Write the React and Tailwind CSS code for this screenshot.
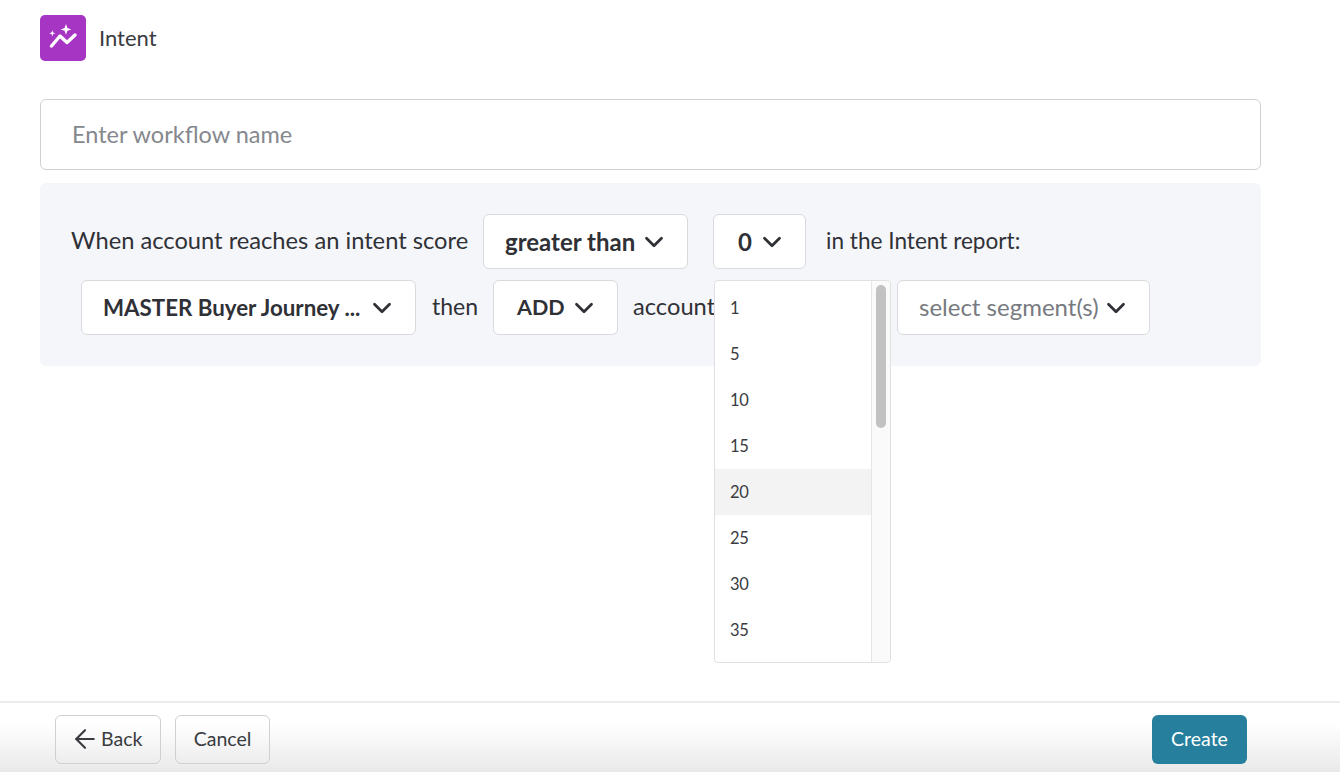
import React from 'react';
import { ArrowLeft, ChevronDown } from 'lucide-react';

const OPTIONS = ['1', '5', '10', '15', '20', '25', '30', '35'];

function Select({ label, className, muted = false }) {
  return (
    <button className={`${className} h-[55px] shrink-0 flex items-center justify-between pr-[18px] bg-white border border-[#d9dadd] rounded-[6px] ${muted ? 'font-normal text-[#777a80]' : 'font-bold text-[#2f3136]'}`}>
      <span className={muted ? 'pb-[2px]' : ''}>{label}</span>
      <ChevronDown size={30} strokeWidth={2.2} className="text-[#2f3136]" />
    </button>
  );
}

function IntentIcon() {
  return (
    <div className="w-[46px] h-[46px] rounded-[5px] bg-[#a535c2] flex items-center justify-center">
      <svg width="46" height="46" viewBox="0 0 46 46" fill="none">
        <path d="M11.5 31 L20 21 L27 27.5 L35 20" stroke="#fff" strokeWidth="3.4" strokeLinecap="round" strokeLinejoin="round" />
        <path d="M26 9 L27.4 13 L31.4 14.4 L27.4 15.8 L26 19.8 L24.6 15.8 L20.6 14.4 L24.6 13 Z" fill="#fff" />
        <path d="M12.3 15.2 L13.1 17.5 L15.4 18.3 L13.1 19.1 L12.3 21.4 L11.5 19.1 L9.2 18.3 L11.5 17.5 Z" fill="#fff" />
      </svg>
    </div>
  );
}

export default function App() {
  return (
    <div className="w-[1340px] h-[772px] overflow-hidden flex flex-col bg-white text-[#2f3136] font-['Lato',sans-serif]">
      <div className="flex-1 pl-[40px] pr-[79px] pt-[15px]">
        {/* Header */}
        <div className="flex items-center gap-[13px]">
          <IntentIcon />
          <span className="text-[22px] pb-[2px] text-[#3a3c41]">Intent</span>
        </div>

        <input
          className="mt-[38px] w-full h-[71px] pl-[31px] pb-[2px] border border-[#cfd1d4] rounded-[6px] text-[23.5px] placeholder:text-[#85888d] outline-none"
          placeholder="Enter workflow name"
        />

        {/* Condition panel */}
        <div className="mt-[13px] h-[183px] bg-[#f5f6fa] rounded-[6px] pt-[31px] pl-[31px]">
          <div className="flex items-center">
            <span className="w-[397px] pb-[1px] text-[23.7px] whitespace-nowrap">When account reaches an intent score</span>
            <Select label="greater than" className="ml-[15px] w-[205px] pl-[21px] text-[24px]" />
            <Select label="0" className="ml-[25px] w-[93px] pl-[24px] text-[24px]" />
            <span className="ml-[20px] pb-[1px] text-[22.6px] whitespace-nowrap">in the Intent report:</span>
          </div>
          <div className="flex items-center mt-[11px] ml-[10px]">
            <Select label="MASTER Buyer Journey ..." className="w-[335px] pl-[21px] text-[22.3px]" />
            <span className="ml-[16px] w-[46px] pb-[2px] text-[23px]">then</span>
            <Select label="ADD" className="ml-[15px] w-[125px] pl-[23px] text-[21.5px]" />
            <span className="ml-[15px] w-[81px] pb-[2px] text-[23.7px] whitespace-nowrap">accounts</span>
            {/* Open score menu */}
            <div className="relative w-[183px] h-[55px] shrink-0">
              <div className="absolute left-0 top-0 w-[177px] h-[383px] flex bg-white border border-[#dfe0e2] rounded-[4px] overflow-hidden z-10">
                <div className="flex-1 pt-[4px]">
                  {OPTIONS.map(o => (
                    <div key={o} className={`h-[46px] flex items-center pl-[15px] text-[16.5px] tracking-tight text-[#3a3c41] ${o === '20' ? 'bg-[#f3f3f3]' : ''}`}>
                      {o}
                    </div>
                  ))}
                </div>
                <div className="w-[19px] bg-[#fafafa] border-l border-[#e6e6e6] pt-[4px] pl-[4px]">
                  <div className="w-[10px] h-[143px] rounded-full bg-[#c2c2c2]" />
                </div>
              </div>
            </div>
            <Select label="select segment(s)" className="w-[253px] pl-[21px] text-[24px]" muted />
          </div>
        </div>
      </div>

      {/* Footer */}
      <div className="h-[71px] shrink-0 border-t-2 border-[#ececec] bg-gradient-to-b from-white from-30% to-[#e9e9e9] flex items-center justify-between pt-[4px] pl-[55px] pr-[93px]">
        <div className="flex gap-[14px]">
          <button className="w-[106px] h-[49px] flex items-center pl-[14px] pb-[1px] border border-[#cfd0d2] rounded-[6px] text-[19.5px] text-[#3a3c41]">
            <ArrowLeft size={30} strokeWidth={1.7} />
            <span className="ml-[1px]">Back</span>
          </button>
          <button className="w-[95px] h-[49px] pb-[1px] border border-[#cfd0d2] rounded-[6px] text-[19.5px] text-[#3a3c41]">
            Cancel
          </button>
        </div>
        <button className="w-[95px] h-[49px] pb-[2px] rounded-[6px] bg-[#267f9c] text-white text-[19.5px]">
          Create
        </button>
      </div>
    </div>
  );
}
